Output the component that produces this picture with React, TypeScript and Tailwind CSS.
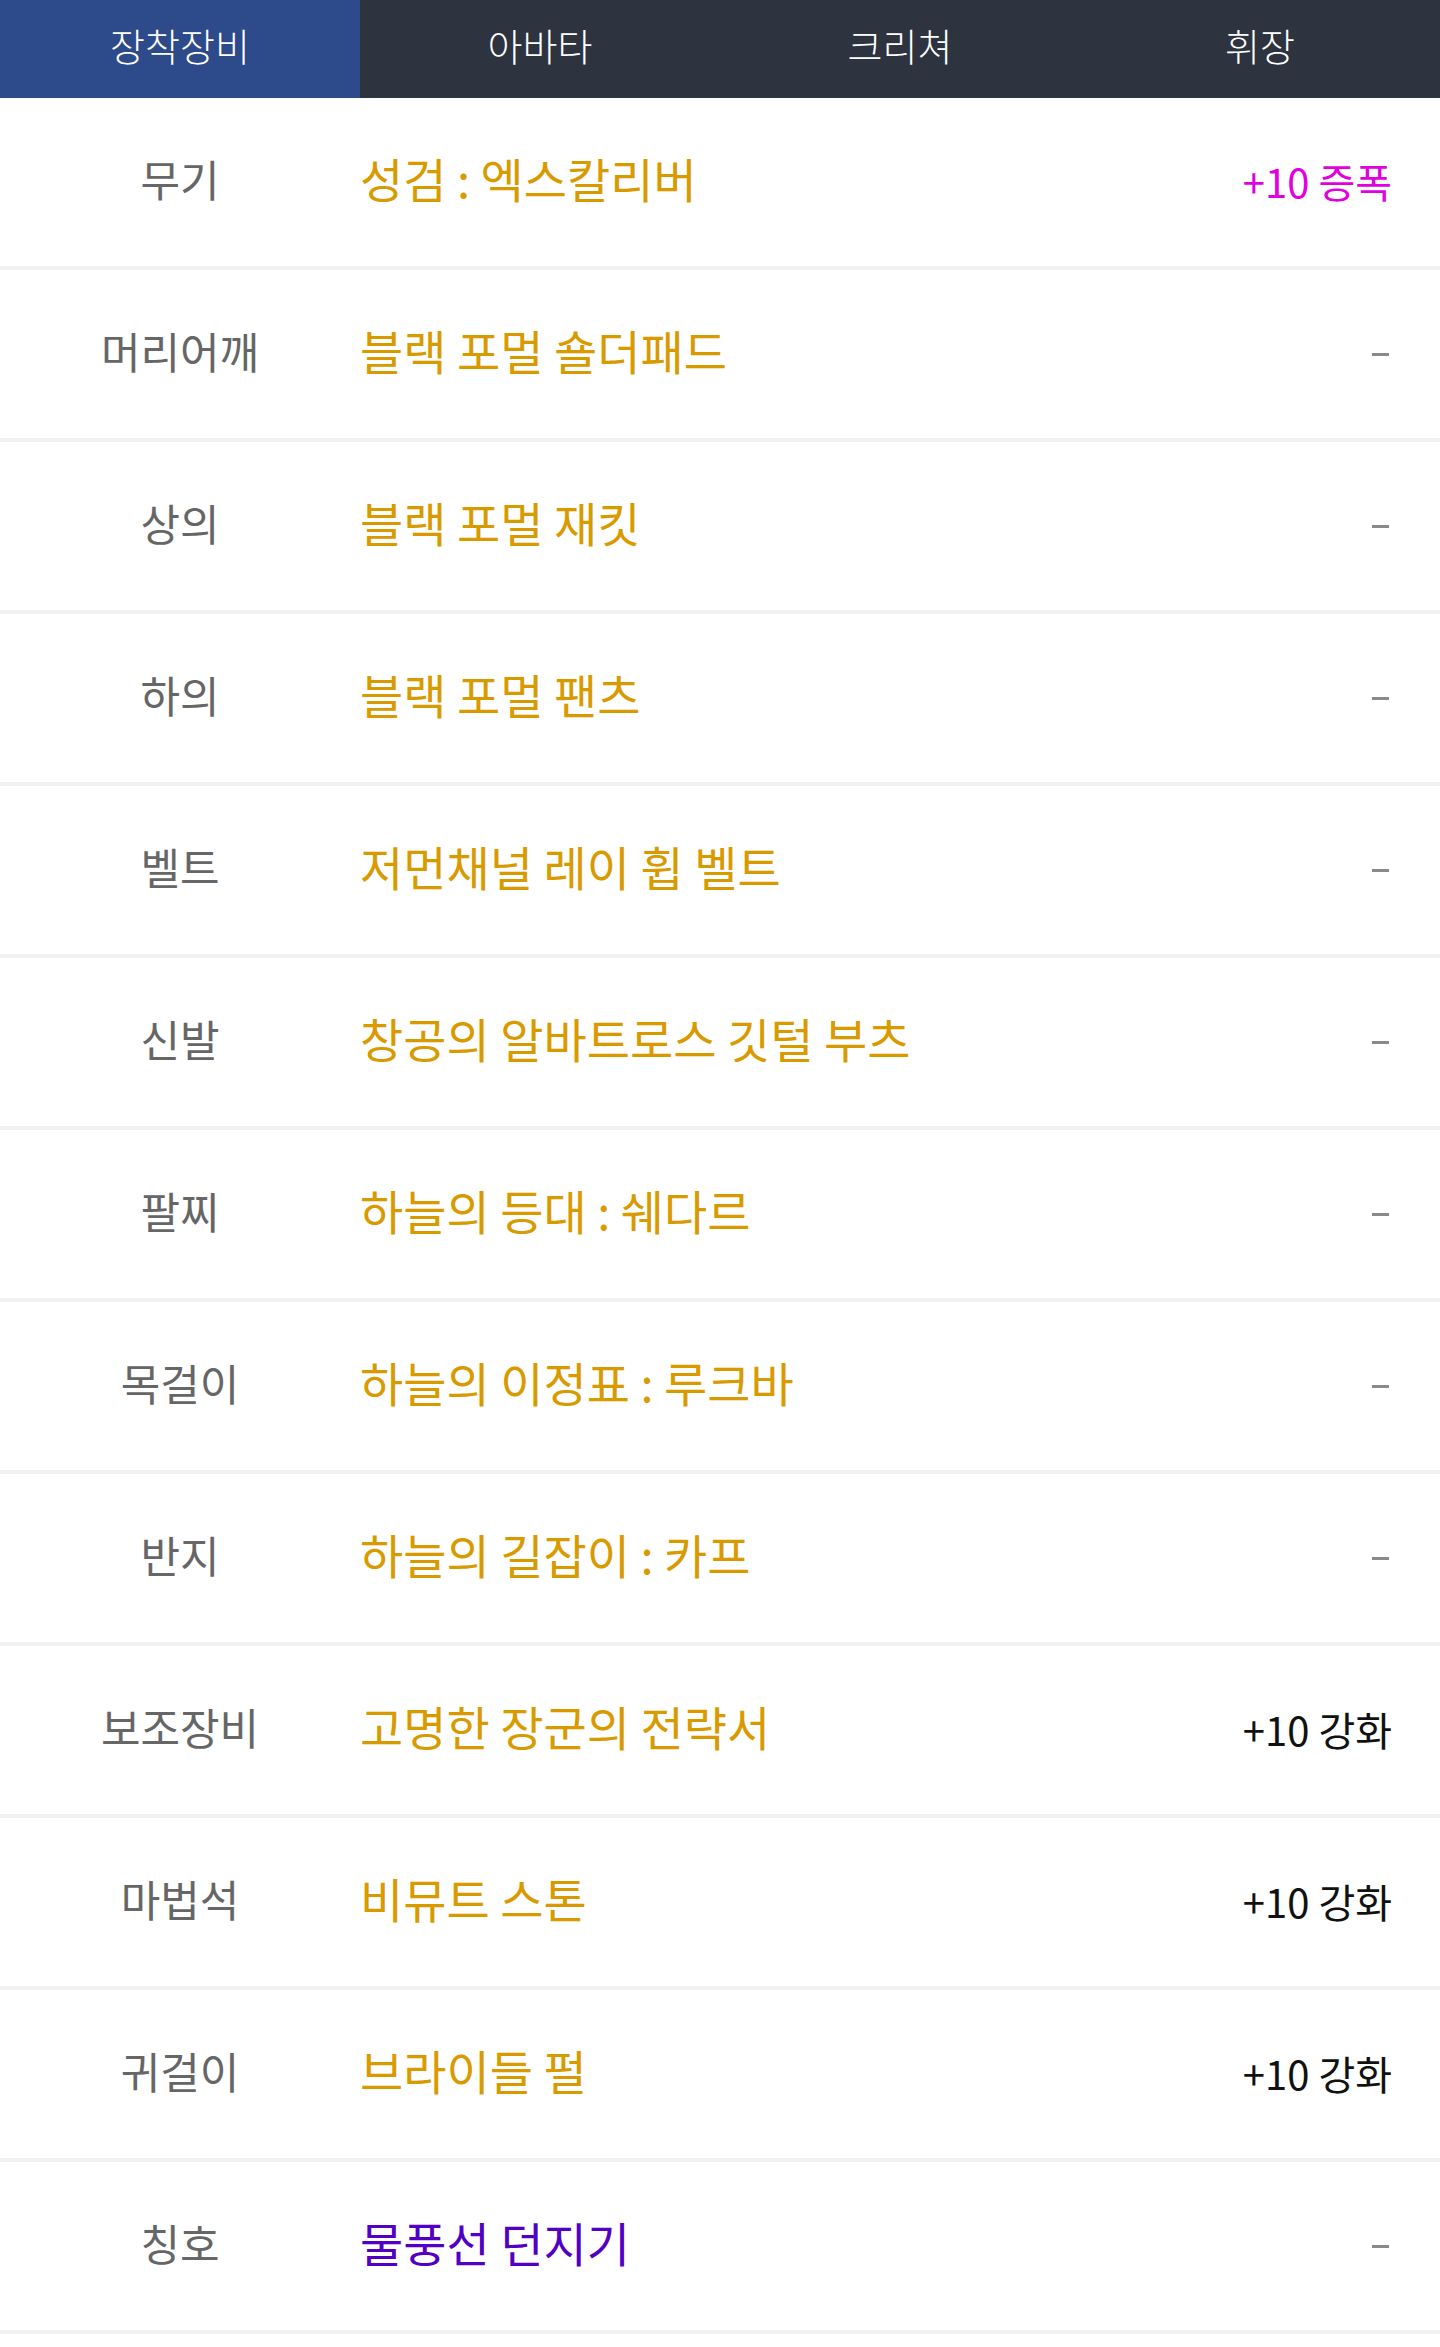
import React from 'react';

const TABS = ['장착장비', '아바타', '크리쳐', '휘장'];

type Item = { slot: string; name: string; value: string; nameColor?: string; valueColor?: string };

const ITEMS: Item[] = [
  { slot: '무기', name: '성검 : 엑스칼리버', value: '+10 증폭', valueColor: 'text-[#e000e0]' },
  { slot: '머리어깨', name: '블랙 포멀 숄더패드', value: '-' },
  { slot: '상의', name: '블랙 포멀 재킷', value: '-' },
  { slot: '하의', name: '블랙 포멀 팬츠', value: '-' },
  { slot: '벨트', name: '저먼채널 레이 휩 벨트', value: '-' },
  { slot: '신발', name: '창공의 알바트로스 깃털 부츠', value: '-' },
  { slot: '팔찌', name: '하늘의 등대 : 쉐다르', value: '-' },
  { slot: '목걸이', name: '하늘의 이정표 : 루크바', value: '-' },
  { slot: '반지', name: '하늘의 길잡이 : 카프', value: '-' },
  { slot: '보조장비', name: '고명한 장군의 전략서', value: '+10 강화', valueColor: 'text-[#111111]' },
  { slot: '마법석', name: '비뮤트 스톤', value: '+10 강화', valueColor: 'text-[#111111]' },
  { slot: '귀걸이', name: '브라이들 펄', value: '+10 강화', valueColor: 'text-[#111111]' },
  { slot: '칭호', name: '물풍선 던지기', value: '-', nameColor: 'text-[#5200c4]' },
];

function EquipRow({ item }: { item: Item }) {
  const isDash = item.value === '-';
  return (
    <div className="flex items-center h-[172px] pb-[8px] border-b-4 border-[#f1f1f1]">
      <div className="w-[360px] shrink-0 text-center text-[43px] text-[#666666]">{item.slot}</div>
      <div className={`flex-1 text-[47px] ${item.nameColor ?? 'text-[#d99a00]'}`}>{item.name}</div>
      {isDash ? (
        <div className="pr-[51px] pt-[8px] flex items-center">
          <span className="block w-[17px] h-[3px] bg-[#8a8a8a]" />
        </div>
      ) : (
        <div className={`pr-[48px] pt-[5px] text-[40px] ${item.valueColor}`}>{item.value}</div>
      )}
    </div>
  );
}

export default function App() {
  return (
    <div className="w-[1440px] min-h-[2347px] bg-white font-['Noto_Sans_CJK_KR','Noto_Sans',sans-serif]">
      <div className="grid grid-cols-4 h-[98px] bg-[#2d333f]">
        {TABS.map((tab, i) => (
          <div
            key={tab}
            className={`flex items-center justify-center pb-[10px] text-[38px] font-light text-white ${i === 0 ? 'bg-[#2d4a8b]' : ''}`}
          >
            {tab}
          </div>
        ))}
      </div>
      {ITEMS.map((item) => (
        <EquipRow key={item.slot} item={item} />
      ))}
    </div>
  );
}
